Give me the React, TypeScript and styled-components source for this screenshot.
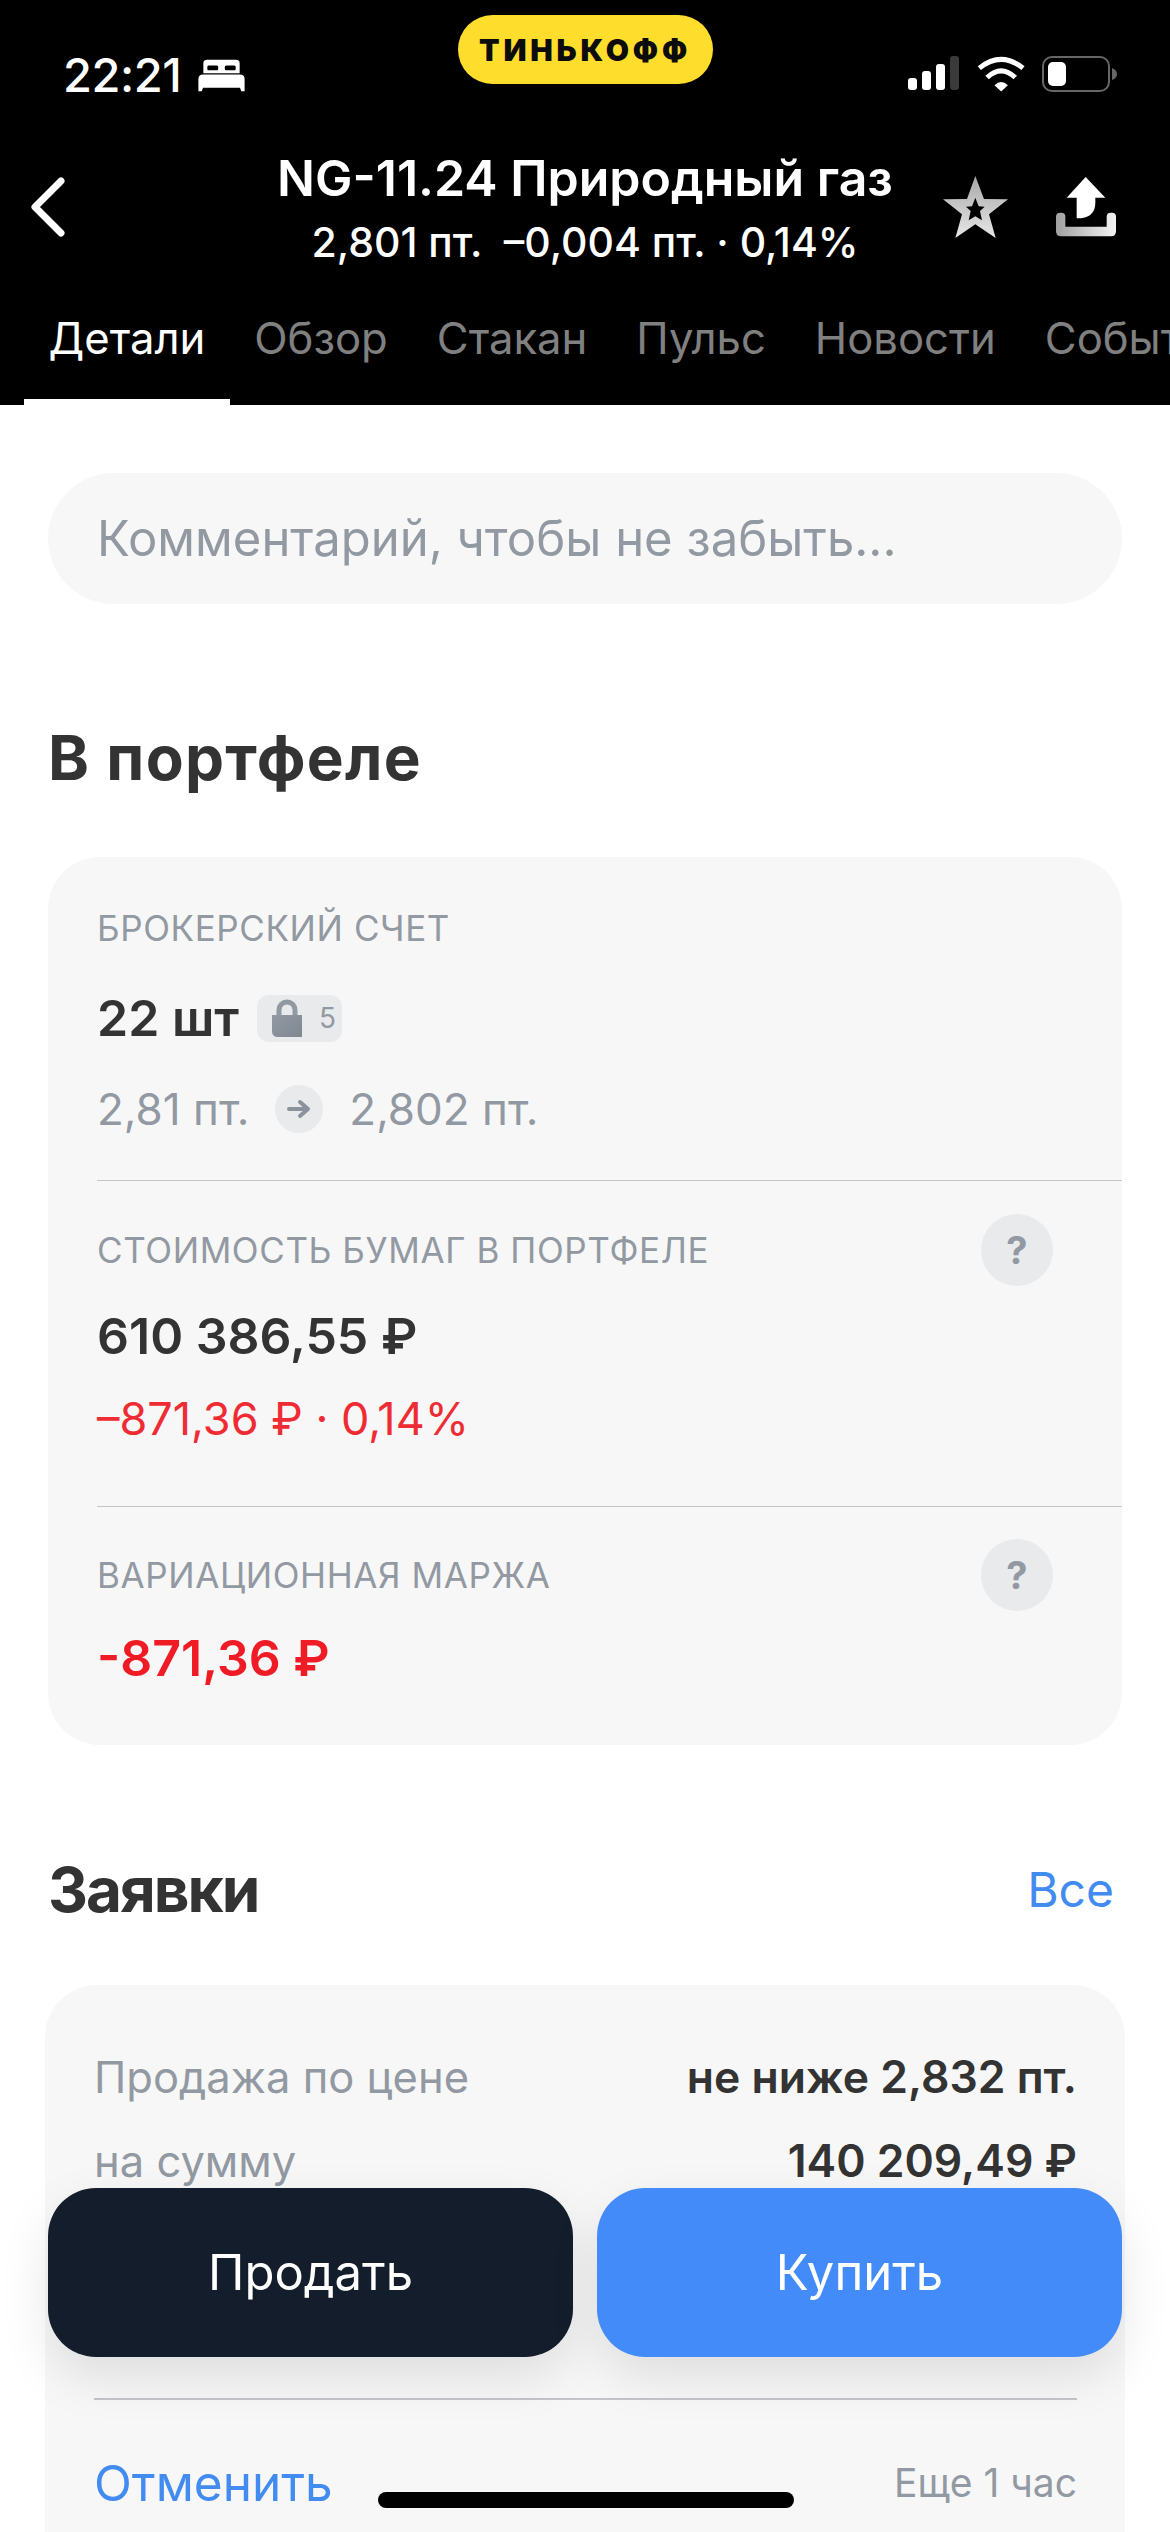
import React from 'react';
import styled, { createGlobalStyle } from 'styled-components';

const GlobalStyle = createGlobalStyle`
  html, body {
    margin: 0;
    padding: 0;
    background: #fff;
  }
  * {
    box-sizing: border-box;
  }
`;

const Page = styled.div`
  position: relative;
  width: 1170px;
  height: 2532px;
  overflow: hidden;
  background: #fff;
  font-family: Inter, 'Noto Sans', sans-serif;
  color: #333;
`;

// ------
// Header
// ------

const Header = styled.header`
  height: 405px;
  background: #000;
  color: #fff;
`;

const StatusBar = styled.div`
  display: grid;
  grid-template-columns: 1fr auto 1fr;
  height: 148px;
  padding-top: 15px;
`;

const StatusLeft = styled.div`
  display: flex;
  align-items: center;
  gap: 17px;
  height: 34px;
  margin-top: 43px;
  padding-left: 63px;
`;

const Clock = styled.span`
  font-size: 47px;
  font-weight: 500;
  line-height: 34px;
  letter-spacing: -0.5px;
`;

const BrandPill = styled.div`
  display: flex;
  align-items: center;
  justify-content: center;
  width: 255px;
  height: 69px;
  border-radius: 35px;
  background: #ffdd2d;
  color: #0c0c0c;
  font-size: 30px;
  font-weight: 900;
  letter-spacing: 3.8px;
`;

const StatusRight = styled.div`
  display: flex;
  align-items: flex-start;
  gap: 17px;
  margin-top: 41px;
  padding-left: 195px;
`;

const NavRow = styled.div`
  display: grid;
  grid-template-columns: 1fr auto 1fr;
  align-items: center;
`;

const BackSlot = styled.div`
  display: flex;
  padding-left: 30px;
`;

const TitleBlock = styled.div`
  text-align: center;
`;

const Title = styled.div`
  font-size: 50px;
  font-weight: 600;
  line-height: 60px;
  white-space: nowrap;
`;

const Subtitle = styled.div`
  margin-top: 10px;
  font-size: 41px;
  font-weight: 500;
  line-height: 48px;
  white-space: pre;
`;

const Actions = styled.div`
  display: flex;
  justify-content: flex-end;
  align-items: center;
  gap: 48px;
  padding-right: 54px;
`;

const Tabs = styled.nav`
  display: flex;
  margin-top: 45px;
  padding-left: 24px;
  white-space: nowrap;
`;

const Tab = styled.div<{ $active?: boolean }>`
  flex-shrink: 0;
  height: 94px;
  padding: 0 24.5px;
  border-bottom: 6px solid ${p => (p.$active ? '#fff' : 'transparent')};
  color: ${p => (p.$active ? '#fff' : '#808080')};
  font-size: 43.6px;
  line-height: 56px;
`;

// -------
// Content
// -------

const Content = styled.main`
  padding: 68px 48px 0;
`;

const CommentField = styled.div`
  height: 131px;
  padding-left: 49px;
  border-radius: 66px;
  background: #f7f7f7;
  color: #9299a2;
  font-size: 49px;
  line-height: 131px;
`;

const SectionTitle = styled.h2<{ $spacing: number }>`
  margin: 0;
  color: #333;
  font-size: 62px;
  font-weight: 700;
  line-height: 76px;
  letter-spacing: ${p => p.$spacing}px;
`;

const PortfolioTitle = styled(SectionTitle)`
  margin-top: 116px;
`;

const Card = styled.section`
  margin-top: 61px;
  border-radius: 52px;
  background: #f7f7f7;
`;

const CardPart = styled.div<{ $top: number; $bottom: number; $divided?: boolean }>`
  margin-left: 49px;
  padding-top: ${p => p.$top}px;
  padding-bottom: ${p => p.$bottom}px;
  border-top: ${p => (p.$divided ? '1.5px solid #c4c5c8' : 'none')};
`;

const LabelRow = styled.div`
  display: flex;
  align-items: center;
  justify-content: space-between;
  height: 44px;
  padding-right: 69px;
`;

const Label = styled.div`
  color: #9299a2;
  font-size: 35px;
  line-height: 44px;
  letter-spacing: 0.6px;
`;

const HelpButton = styled.div`
  display: flex;
  align-items: center;
  justify-content: center;
  width: 72px;
  height: 72px;
  border-radius: 50%;
  background: #e9eaec;
  color: #9299a2;
  font-size: 38px;
  font-weight: 700;
`;

const BigValue = styled.div<{ $top: number; $red?: boolean }>`
  display: flex;
  align-items: center;
  margin-top: ${p => p.$top}px;
  color: ${p => (p.$red ? '#ef1c26' : '#333')};
  font-size: 50px;
  font-weight: 600;
  line-height: 60px;
`;

const LockBadge = styled.span`
  display: flex;
  align-items: center;
  gap: 17px;
  width: 85px;
  height: 47px;
  margin-left: 18px;
  padding-left: 15px;
  border-radius: 12px;
  background: #e9eaec;
  color: #9299a2;
  font-size: 28px;
  font-weight: 400;
`;

const PriceRow = styled.div`
  display: flex;
  align-items: center;
  gap: 26px;
  margin-top: 33px;
  color: #9299a2;
  font-size: 44px;
  line-height: 56px;
`;

const ArrowCircle = styled.span`
  display: flex;
  align-items: center;
  justify-content: center;
  width: 48px;
  height: 48px;
  border-radius: 50%;
  background: #e9eaec;
`;

const ChangeText = styled.div`
  margin-top: 25px;
  color: #ef2b33;
  font-size: 45px;
  line-height: 56px;
`;

const OrdersHeader = styled.div`
  display: flex;
  align-items: center;
  justify-content: space-between;
  margin-top: 107px;
  padding-right: 8px;
`;

const LinkText = styled.span<{ $size: number }>`
  color: #428bf0;
  font-size: ${p => p.$size}px;
  line-height: 56px;
`;

const OrderCard = styled.section`
  margin: 57px -3px 0;
  padding: 64px 48px 120px 49px;
  border-radius: 52px;
  background: #f7f7f7;
`;

const OrderRow = styled.div<{ $top?: number }>`
  display: flex;
  align-items: center;
  justify-content: space-between;
  margin-top: ${p => p.$top ?? 0}px;
  color: #9299a2;
  font-size: 43.5px;
  line-height: 56px;
`;

const OrderValue = styled.span`
  color: #333;
  font-size: 44.5px;
  font-weight: 600;
`;

const OrderDivider = styled.div`
  height: 1.5px;
  margin-top: 209px;
  background: #c4c5c8;
`;

const TimeLeft = styled.span`
  color: #9299a2;
  font-size: 39px;
`;

// ---------------
// Floating layers
// ---------------

const TradeBar = styled.div`
  position: absolute;
  left: 48px;
  right: 48px;
  top: 2188px;
  display: grid;
  grid-template-columns: 1fr 1fr;
  gap: 24px;
`;

const TradeButton = styled.div<{ $color: string }>`
  display: flex;
  align-items: center;
  justify-content: center;
  height: 169px;
  border-radius: 48px;
  background: ${p => p.$color};
  box-shadow: 0 20px 50px rgba(0, 0, 0, 0.1);
  color: #fff;
  font-size: 49px;
`;

const HomeIndicator = styled.div`
  position: absolute;
  left: 378px;
  top: 2492px;
  width: 416px;
  height: 16px;
  border-radius: 8px;
  background: #000;
`;

// -----
// Icons
// -----

function BedIcon() {
  return (
    <svg width="47" height="33" viewBox="475 85 140 100">
      <path
        fill="#fff"
        fillRule="evenodd"
        d="M490 128v-30q0-11 11-11h88q11 0 11 11v30zM503 119h31q4-14-4-14h-23q-8 0-4 14zM556 119h31q4-14-4-14h-23q-8 0-4 14z"
      />
      <path fill="#fff" d="M475 146q0-14 14-14h112q14 0 14 14v37h-10l-4-11h-112l-4 11h-10z" />
    </svg>
  );
}

function SignalIcon() {
  return (
    <svg width="52" height="34" viewBox="0 0 52 34">
      <rect x="0" y="22" width="9" height="12" rx="3" fill="#fff" />
      <rect x="14" y="15" width="9" height="19" rx="3" fill="#fff" />
      <rect x="28" y="8" width="9" height="26" rx="3" fill="#fff" />
      <rect x="42" y="0" width="9" height="34" rx="3" fill="#3a3a3a" />
    </svg>
  );
}

function WifiIcon() {
  return (
    <svg width="48" height="36" viewBox="225 47 143 105">
      <path d="M232 82Q297 30 362 82" fill="none" stroke="#fff" strokeWidth="15" />
      <path d="M255 110Q297 70 339 110" fill="none" stroke="#fff" strokeWidth="15" />
      <path d="M277 133Q297 114 317 133L297 152z" fill="#fff" />
    </svg>
  );
}

function BatteryIcon() {
  return (
    <svg width="75" height="36" viewBox="0 0 75 36">
      <rect x="1" y="1" width="66" height="34" rx="9" fill="none" stroke="#666" strokeWidth="2" />
      <rect x="6" y="6" width="18" height="24" rx="5" fill="#fff" />
      <path d="M70 12q5 2 5 6t-5 6z" fill="#666" />
    </svg>
  );
}

function BackIcon() {
  return (
    <svg width="36" height="60" viewBox="0 0 36 60">
      <path d="M31 4L5 30l26 26" fill="none" stroke="#fff" strokeWidth="7" strokeLinecap="round" strokeLinejoin="round" />
    </svg>
  );
}

function StarIcon() {
  return (
    <svg width="65" height="62" viewBox="128 405 195 186">
      <defs>
        <linearGradient id="starFill" x1="0" y1="0" x2="0" y2="1">
          <stop offset="0" stopColor="#a8a8a8" />
          <stop offset="1" stopColor="#e8e8e8" />
        </linearGradient>
      </defs>
      <path
        fill="url(#starFill)"
        fillRule="evenodd"
        d="M225 405L251 474L323 475L266 520L286 591L225 550L165 591L185 520L128 475L200 474zM225 470L215 496L197 497L211 510L205 538L225 526L245 538L239 510L253 497L235 496z"
      />
    </svg>
  );
}

function ShareIcon() {
  return (
    <svg width="60" height="60" viewBox="468 403 180 180">
      <defs>
        <linearGradient id="trayFill" x1="0" y1="0" x2="1" y2="0">
          <stop offset="0" stopColor="#a0a0a0" />
          <stop offset="1" stopColor="#f4f4f4" />
        </linearGradient>
      </defs>
      <path fill="#fff" d="M557 403L616 465H586V480Q586 527 530 527V465H500z" />
      <path
        fill="url(#trayFill)"
        d="M468 522q0-12 12-12h4q12 0 12 12v30h124v-30q0-12 12-12h4q12 0 12 12v44q0 15-15 15H483q-15 0-15-15z"
      />
    </svg>
  );
}

function LockIcon() {
  return (
    <svg width="30" height="38" viewBox="0 0 30 38">
      <defs>
        <linearGradient id="lockFill" x1="0" y1="0" x2="1" y2="1">
          <stop offset="0" stopColor="#9299a2" />
          <stop offset="1" stopColor="#7f8791" />
        </linearGradient>
      </defs>
      <path d="M7 18v-7a8 8 0 0 1 16 0v7" fill="none" stroke="#9299a2" strokeWidth="5" />
      <path d="M0 16h30v22H6q-6 0-6-6z" fill="url(#lockFill)" />
    </svg>
  );
}

function ArrowIcon() {
  return (
    <svg width="24" height="20" viewBox="0 0 24 20">
      <path
        d="M2 10h19M13 3l8 7-8 7"
        fill="none"
        stroke="#8b929b"
        strokeWidth="4"
        strokeLinecap="round"
        strokeLinejoin="round"
      />
    </svg>
  );
}

export default function App() {
  return (
    <Page>
      <GlobalStyle />
      <Header>
        <StatusBar>
          <StatusLeft>
            <Clock>22:21</Clock>
            <BedIcon />
          </StatusLeft>
          <BrandPill>ТИНЬКОФФ</BrandPill>
          <StatusRight>
            <SignalIcon />
            <WifiIcon />
            <BatteryIcon />
          </StatusRight>
        </StatusBar>
        <NavRow>
          <BackSlot>
            <BackIcon />
          </BackSlot>
          <TitleBlock>
            <Title>NG-11.24 Природный газ</Title>
            <Subtitle>2,801 пт.  –0,004 пт. · 0,14%</Subtitle>
          </TitleBlock>
          <Actions>
            <StarIcon />
            <ShareIcon />
          </Actions>
        </NavRow>
        <Tabs>
          <Tab $active>Детали</Tab>
          <Tab>Обзор</Tab>
          <Tab>Стакан</Tab>
          <Tab>Пульс</Tab>
          <Tab>Новости</Tab>
          <Tab>События</Tab>
        </Tabs>
      </Header>

      <Content>
        <CommentField>Комментарий, чтобы не забыть...</CommentField>

        <PortfolioTitle $spacing={1.3}>В портфеле</PortfolioTitle>
        <Card>
          <CardPart $top={49} $bottom={43}>
            <Label>БРОКЕРСКИЙ СЧЕТ</Label>
            <BigValue $top={38}>
              22 шт
              <LockBadge>
                <LockIcon />5
              </LockBadge>
            </BigValue>
            <PriceRow>
              2,81 пт.
              <ArrowCircle>
                <ArrowIcon />
              </ArrowCircle>
              2,802 пт.
            </PriceRow>
          </CardPart>
          <CardPart $divided $top={47} $bottom={59}>
            <LabelRow>
              <Label>СТОИМОСТЬ БУМАГ В ПОРТФЕЛЕ</Label>
              <HelpButton>?</HelpButton>
            </LabelRow>
            <BigValue $top={34}>610 386,55 ₽</BigValue>
            <ChangeText>–871,36 ₽ · 0,14%</ChangeText>
          </CardPart>
          <CardPart $divided $top={46} $bottom={57}>
            <LabelRow>
              <Label>ВАРИАЦИОННАЯ МАРЖА</Label>
              <HelpButton>?</HelpButton>
            </LabelRow>
            <BigValue $top={31} $red>
              -871,36 ₽
            </BigValue>
          </CardPart>
        </Card>

        <OrdersHeader>
          <SectionTitle $spacing={-2}>Заявки</SectionTitle>
          <LinkText $size={48}>Все</LinkText>
        </OrdersHeader>
        <OrderCard>
          <OrderRow>
            Продажа по цене
            <OrderValue>не ниже 2,832 пт.</OrderValue>
          </OrderRow>
          <OrderRow $top={28}>
            на сумму
            <OrderValue>140 209,49 ₽</OrderValue>
          </OrderRow>
          <OrderDivider />
          <OrderRow $top={55}>
            <LinkText $size={49.5}>Отменить</LinkText>
            <TimeLeft>Еще 1 час</TimeLeft>
          </OrderRow>
        </OrderCard>
      </Content>

      <TradeBar>
        <TradeButton $color="#141d2b">Продать</TradeButton>
        <TradeButton $color="#428bf9">Купить</TradeButton>
      </TradeBar>
      <HomeIndicator />
    </Page>
  );
}
